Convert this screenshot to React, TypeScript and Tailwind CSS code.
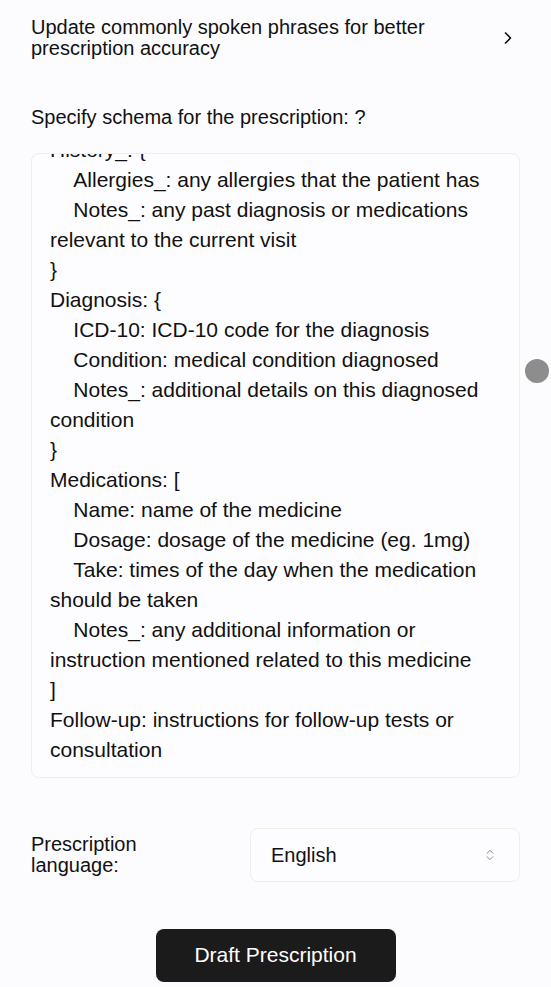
import { ChevronRight, ChevronsUpDown } from "lucide-react";

const schema = `History_: {
    Allergies_: any allergies that the patient has
    Notes_: any past diagnosis or medications relevant to the current visit
}
Diagnosis: {
    ICD-10: ICD-10 code for the diagnosis
    Condition: medical condition diagnosed
    Notes_: additional details on this diagnosed condition
}
Medications: [
    Name: name of the medicine
    Dosage: dosage of the medicine (eg. 1mg)
    Take: times of the day when the medication should be taken
    Notes_: any additional information or instruction mentioned related to this medicine
]
Follow-up: instructions for follow-up tests or consultation`;

export default function App() {
  return (
    <div className="relative min-h-screen bg-[#fcfcff] px-[31px] text-[#111] font-['Liberation_Sans',Arial,sans-serif]">
      <div className="flex items-center justify-between pt-[17px]">
        <p className="text-[20px] leading-[21px]">
          Update commonly spoken phrases for better
          <br />
          prescription accuracy
        </p>
        <ChevronRight className="mr-[2px] h-5 w-5" strokeWidth={2} />
      </div>

      <p className="mt-[48px] text-[20px] leading-[21px]">
        Specify schema for the prescription: ?
      </p>

      <div className="mt-[25px] h-[625px] overflow-hidden rounded-lg border border-[#ededf2] bg-[#fdfdff] px-[18px]">
        <div className="-mt-[19px] whitespace-pre-wrap text-[21px] leading-[30px]">
          {schema}
        </div>
      </div>

      <div className="mt-[50px] flex items-center justify-between">
        <p className="text-[20px] leading-[21px]">
          Prescription
          <br />
          language:
        </p>
        <div className="flex h-[54px] w-[270px] items-center justify-between rounded-lg border border-[#ededf2] bg-[#fdfdff] pl-[20px] pr-[22px]">
          <span className="text-[20px]">English</span>
          <ChevronsUpDown className="h-[14px] w-[14px] text-[#777]" strokeWidth={1.5} />
        </div>
      </div>

      <div className="mt-[47px] flex justify-center">
        <button className="h-[53px] w-[240px] rounded-lg bg-[#1b1b1b] pb-[2px] text-[21px] text-white">
          Draft Prescription
        </button>
      </div>

      <div className="absolute left-[525px] top-[359px] h-6 w-6 rounded-full bg-[#8d8d8d]" />
    </div>
  );
}
